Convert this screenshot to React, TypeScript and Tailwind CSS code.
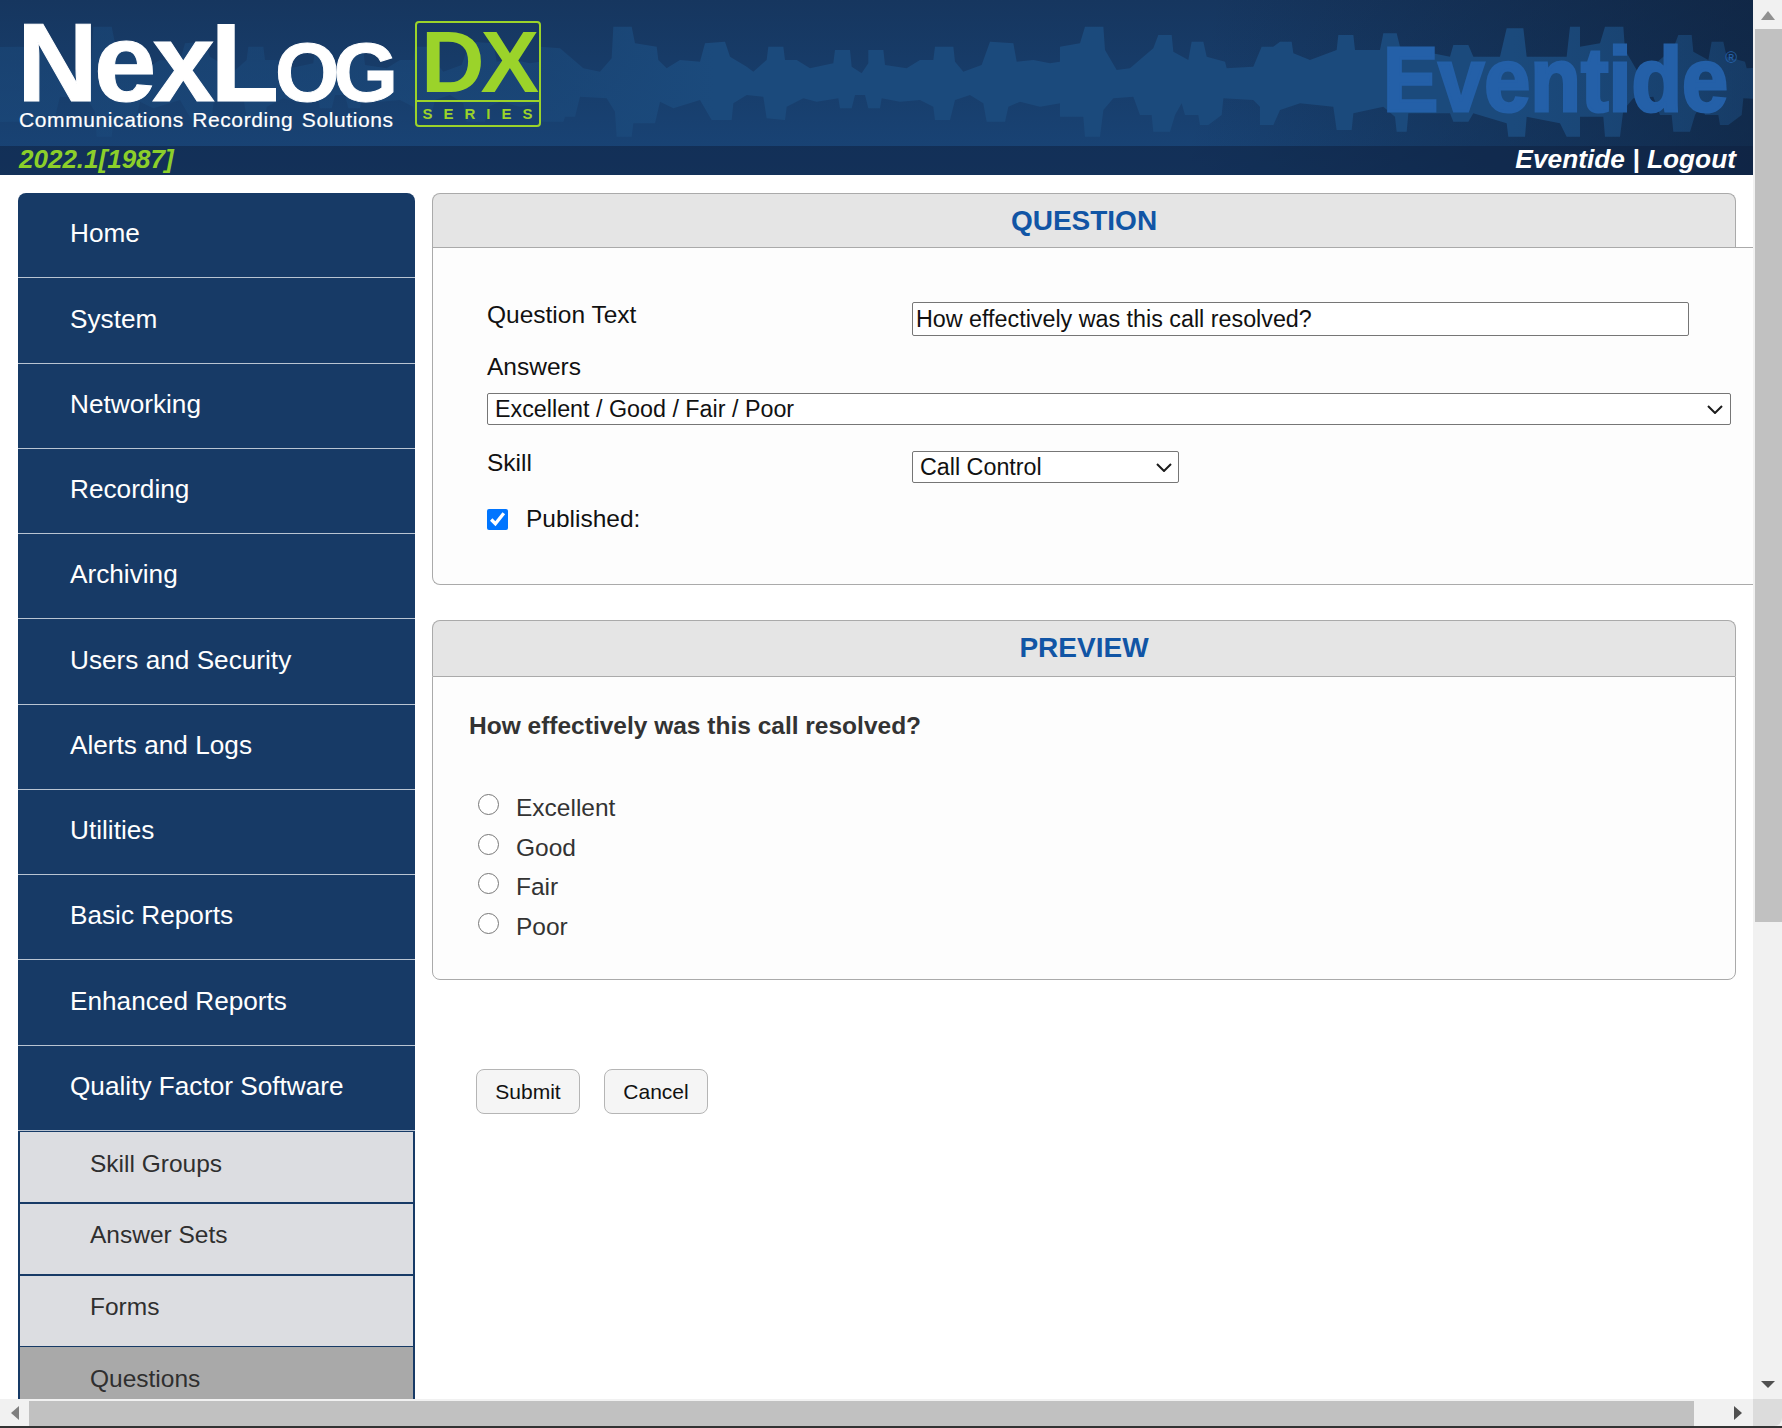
const mainNav = [
  'Home',
  'System',
  'Networking',
  'Recording',
  'Archiving',
  'Users and Security',
  'Alerts and Logs',
  'Utilities',
  'Basic Reports',
  'Enhanced Reports',
  'Quality Factor Software',
];

const subNav = ['Answer Sets', 'Forms'];
const answers = ['Excellent', 'Good', 'Fair', 'Poor'];

// wave form outline traced from the header, stored at 3x so it can be repeated
const topA = [
  [0, 140], [60, 145], [130, 205], [180, 215], [215, 175], [220, 80], [275, 80], [285, 130], [350, 140],
  [355, 180], [380, 205], [420, 180], [480, 185], [495, 130], [555, 125], [570, 170], [620, 200],
  [640, 215], [680, 180], [685, 140], [730, 140], [735, 180], [770, 180], [810, 205], [880, 190],
  [885, 150], [930, 150], [935, 200], [965, 220], [985, 190], [985, 150], [1030, 150], [1035, 195],
  [1100, 205], [1140, 180], [1180, 180], [1185, 140], [1240, 140], [1245, 185], [1270, 215],
  [1325, 195], [1350, 125], [1420, 130], [1430, 185], [1480, 180], [1530, 190], [1560, 185],
];
const bottomA = [
  [0, 365], [70, 365], [75, 350], [105, 350], [120, 290], [200, 295], [225, 335], [230, 410], [275, 410],
  [280, 370], [345, 370], [360, 305], [400, 325], [480, 300], [515, 360], [575, 360], [580, 310],
  [620, 285], [670, 290], [680, 355], [735, 360], [740, 320], [790, 295], [830, 305], [895, 295],
  [900, 325], [935, 325], [945, 285], [975, 285], [985, 325], [1020, 325], [1025, 295], [1080, 305],
  [1140, 300], [1180, 320], [1185, 360], [1230, 360], [1245, 300], [1290, 285], [1330, 310],
  [1340, 365], [1395, 365], [1405, 320], [1440, 305], [1500, 320], [1560, 310],
];
const topB = [
  [0, 140], [60, 130], [75, 80], [130, 80], [135, 150], [170, 210], [210, 205], [280, 145], [295, 105],
  [335, 105], [340, 155], [385, 180], [395, 125], [430, 125], [440, 170], [495, 185], [500, 205],
  [580, 200], [605, 140], [640, 140], [660, 125], [695, 125], [700, 160], [750, 180], [830, 150],
  [835, 105], [880, 105], [885, 150], [960, 150], [970, 100], [1010, 100], [1020, 140], [1170, 170],
  [1180, 135], [1225, 135], [1240, 170], [1320, 170], [1340, 85], [1390, 85], [1400, 170], [1520, 170],
  [1530, 80], [1560, 80],
];
const bottomB = [
  [0, 350], [70, 350], [75, 410], [120, 410], [130, 330], [160, 295], [220, 290], [240, 345], [275, 345],
  [280, 395], [330, 395], [345, 345], [365, 310], [375, 345], [415, 345], [420, 375], [445, 375],
  [485, 345], [490, 295], [580, 300], [600, 320], [600, 375], [640, 375], [660, 330], [720, 310],
  [820, 320], [830, 390], [875, 390], [880, 340], [970, 320], [1005, 350], [1010, 395], [1040, 395],
  [1045, 340], [1170, 340], [1180, 365], [1225, 365], [1240, 340], [1340, 370], [1345, 410],
  [1395, 410], [1400, 350], [1500, 370], [1520, 410], [1560, 410],
];

const place = (offset: number, pts: number[][]) =>
  pts.map(([x, y]) => `${offset + x / 3},${y / 3}`);

const wavePoints = [
  '0,47',
  ...place(20, topA),
  ...place(540, topA),
  ...place(1060, topB),
  ...place(1580, topB),
  ...[
    ...place(20, bottomA),
    ...place(540, bottomA),
    ...place(1060, bottomB),
    ...place(1580, bottomB),
  ].reverse(),
  '0,122',
].join(' ');

const Triangle = ({ points, className }: { points: string; className: string }) => (
  <svg viewBox="0 0 14 14" className={className} fill="#505050">
    <polygon points={points} />
  </svg>
);

const Chevron = ({ className }: { className: string }) => (
  <svg
    viewBox="0 0 16 9"
    className={`pointer-events-none absolute h-[9px] w-[16px] ${className}`}
    fill="none"
    stroke="#1c1c1c"
    strokeWidth="2"
  >
    <path d="M1 1l7 7 7-7" />
  </svg>
);

const Header = () => (
  <header className="relative h-[175px] shrink-0 overflow-hidden bg-[linear-gradient(100deg,rgba(13,30,55,0)_68%,rgba(13,30,55,0.65)_100%),linear-gradient(180deg,#16365f_0%,#194578_100%)]">
    <svg className="absolute left-0 top-0 h-[146px] w-[1753px]" viewBox="0 0 1753 146">
      <defs>
        <linearGradient id="waveFill" x1="0" x2="1" y1="0" y2="0">
          <stop offset="0" stopColor="#1b4a7c" stopOpacity="0.5" />
          <stop offset="0.26" stopColor="#1b4a7c" stopOpacity="0.6" />
          <stop offset="0.34" stopColor="#1b4a7c" />
          <stop offset="0.72" stopColor="#1b4a7c" />
          <stop offset="0.86" stopColor="#1b4a7c" stopOpacity="0.45" />
          <stop offset="1" stopColor="#1b4a7c" stopOpacity="0.2" />
        </linearGradient>
      </defs>
      <polygon points={wavePoints} fill="url(#waveFill)" />
    </svg>

    <div className="relative flex h-[146px] items-start justify-between">
      <div className="ml-[19px] mt-[1px] flex">
        <div className="w-[395px]">
          <div className="ml-[-2px] text-[112px] font-bold leading-[118px] tracking-[-4px] text-white [-webkit-text-stroke:1px_#ffffff]">
            NexL
            <span className="text-[118px] leading-none tracking-[-6px] [font-variant:small-caps]">og</span>
          </div>
          <div className="mt-[-14px] whitespace-nowrap text-[21px] leading-[24px] tracking-[0.6px] text-white [-webkit-text-stroke:0.2px_#ffffff] [word-spacing:2px]">
            Communications Recording Solutions
          </div>
        </div>
        <div className="ml-[1px] mt-[20px] flex h-[106px] w-[126px] flex-col rounded-[4px] border-2 border-[#9bd32a] text-[#9bd32a]">
          <div className="h-[77px] text-center text-[88px] font-bold leading-[78px] tracking-[-4px]">
            DX
          </div>
          <div className="flex flex-1 items-center justify-center border-t-2 border-[#9bd32a] pl-[10px] text-[15px] font-bold leading-none tracking-[11px]">
            SERIES
          </div>
        </div>
      </div>
      <div className="mr-[16px] mt-[34px] flex items-start">
        <div className="origin-right scale-x-[0.92] text-[90px] font-bold leading-[92px] text-[#2460a8] [-webkit-text-stroke:3px_#2460a8]">
          Eventide
        </div>
        <div className="ml-[-3px] mt-[16px] text-[16px] leading-none text-[#2460a8]">®</div>
      </div>
    </div>

    <div className="relative flex h-[29px] items-center justify-between bg-[#0e2140]/55 pl-[19px] pr-[17px] text-[26px] font-bold italic leading-none">
      <span className="mb-[4px] text-[#8ccf2a]">2022.1[1987]</span>
      <span className="mb-[2px] whitespace-nowrap text-[26.3px] text-white">Eventide | Logout</span>
    </div>
  </header>
);

const Sidebar = () => (
  <nav className="ml-[18px] w-[397px] shrink-0 text-[26.2px]">
    <div className="overflow-hidden rounded-t-[8px]">
      {mainNav.map((item) => (
        <div
          key={item}
          className="flex h-[85.25px] items-center border-b border-[#b9c4d2] bg-[#173a66] pb-[2px] pl-[52px] text-white"
        >
          {item}
        </div>
      ))}
    </div>
    <div className="border-x-2 border-t border-[#173a66] text-[24.5px] text-[#2f2f2f]">
      <div className="h-[70px] bg-[#dcdde1] pl-[70px] pt-[14px]">Skill Groups</div>
      {subNav.map((item) => (
        <div
          key={item}
          className="h-[72px] border-t-2 border-[#173a66] bg-[#dcdde1] pl-[70px] pt-[13px]"
        >
          {item}
        </div>
      ))}
      <div className="h-[72px] border-t border-[#173a66] bg-[#a9a9a9] pl-[70px] pt-[14px]">
        Questions
      </div>
    </div>
  </nav>
);

const PanelTitle = ({ title, height }: { title: string; height: string }) => (
  <div
    className={`${height} w-[1304px] rounded-t-[8px] border-x border-t border-[#aaaaaa] bg-[#e5e5e5] text-center text-[28px] font-bold leading-[54px] text-[#1155a5]`}
  >
    {title}
  </div>
);

const QuestionPanel = () => (
  <section className="w-[1340px]">
    <PanelTitle title="QUESTION" height="h-[54px]" />
    <div className="h-[338px] rounded-bl-[8px] border border-r-0 border-[#aaaaaa] bg-[#fdfdfd] pl-[54px] pt-[54px] text-[24.5px] text-[#111]">
      <div className="flex items-start">
        <label className="mt-[-3px] w-[425px] leading-[32px]">Question Text</label>
        <input
          className="h-[34px] w-[777px] rounded-[2px] border border-[#767676] bg-white px-[3px] text-[23.3px] leading-none"
          defaultValue="How effectively was this call resolved?"
        />
      </div>
      <label className="mt-[15px] block leading-[32px]">Answers</label>
      <div className="relative mt-[10px] w-[1244px]">
        <select className="block h-[32px] w-full appearance-none rounded-[2px] border border-[#767676] bg-white pl-[7px] pt-[2px] text-[23.3px] leading-none">
          <option>Excellent / Good / Fair / Poor</option>
        </select>
        <Chevron className="right-[8px] top-[12px]" />
      </div>
      <div className="mt-[26px] flex items-start">
        <label className="mt-[-4px] w-[425px] leading-[32px]">Skill</label>
        <div className="relative w-[267px]">
          <select className="block h-[32px] w-full appearance-none rounded-[2px] border border-[#767676] bg-white pl-[7px] pt-[2px] text-[23.3px] leading-none">
            <option>Call Control</option>
          </select>
          <Chevron className="right-[7px] top-[12px]" />
        </div>
      </div>
      <div className="mt-[20px] flex items-center">
        <input
          type="checkbox"
          defaultChecked
          className="h-[21px] w-[21px] accent-[#0075ff]"
        />
        <label className="ml-[18px] leading-[32px]">Published:</label>
      </div>
    </div>
  </section>
);

const PreviewPanel = () => (
  <section className="mt-[35px] w-[1304px]">
    <PanelTitle title="PREVIEW" height="h-[56px]" />
    <div className="h-[304px] rounded-b-[8px] border border-[#aaaaaa] bg-[#fdfdfd] pl-[36px] pt-[32px] text-[24.5px] text-[#333]">
      <div className="font-bold leading-[34px]">How effectively was this call resolved?</div>
      <div className="mt-[49px] pl-[9px]">
        {answers.map((answer) => (
          <div key={answer} className="flex h-[39.5px] items-start">
            <input type="radio" name="answer" className="mt-[2px] h-[21px] w-[21px]" />
            <span className="ml-[17px] leading-[32px]">{answer}</span>
          </div>
        ))}
      </div>
    </div>
  </section>
);

const Actions = () => (
  <div className="ml-[44px] mt-[89px] flex gap-[24px] text-[21px] text-[#111]">
    <button className="h-[45px] w-[104px] rounded-[8px] border border-[#b5b5b5] bg-[#f5f5f5]">
      Submit
    </button>
    <button className="h-[45px] w-[104px] rounded-[8px] border border-[#b5b5b5] bg-[#f5f5f5]">
      Cancel
    </button>
  </div>
);

const VerticalScrollbar = () => (
  <div className="flex w-[29px] shrink-0 flex-col items-center bg-[#f1f1f1]">
    <div className="flex h-[29px] w-full items-center justify-center">
      <Triangle points="0,12 7,3 14,12" className="h-[14px] w-[14px] opacity-60" />
    </div>
    <div className="ml-[2px] h-[893px] w-[27px] bg-[#c1c1c1]" />
    <div className="flex-1" />
    <div className="flex h-[29px] w-full items-center justify-center">
      <Triangle points="0,3 14,3 7,10" className="h-[14px] w-[14px]" />
    </div>
  </div>
);

const HorizontalScrollbar = () => (
  <div className="flex h-[27px] shrink-0 items-end bg-[#f1f1f1]">
    <div className="flex h-full w-[29px] items-center justify-center rounded-bl-[8px]">
      <Triangle points="11,0 11,14 3,7" className="h-[14px] w-[14px] opacity-70" />
    </div>
    <div className="h-[25px] w-[1665px] bg-[#c1c1c1]" />
    <div className="flex h-full flex-1 items-center justify-end pr-[8px]">
      <Triangle points="3,0 11,7 3,14" className="h-[14px] w-[14px]" />
    </div>
    <div className="h-full w-[29px] rounded-br-[8px] bg-[#dcdcdc]" />
  </div>
);

const App = () => (
  <div className="flex h-screen w-screen flex-col overflow-hidden bg-[#333333] font-['Liberation_Sans',Arial,sans-serif]">
    <div className="flex min-h-0 flex-1">
      <div className="min-w-0 flex-1 overflow-hidden bg-white">
        <Header />
        <div className="flex pt-[18px]">
          <Sidebar />
          <main className="ml-[17px] min-w-0 flex-1">
            <QuestionPanel />
            <PreviewPanel />
            <Actions />
          </main>
        </div>
      </div>
      <VerticalScrollbar />
    </div>
    <HorizontalScrollbar />
    <div className="h-[2px] shrink-0" />
  </div>
);

export default App;
